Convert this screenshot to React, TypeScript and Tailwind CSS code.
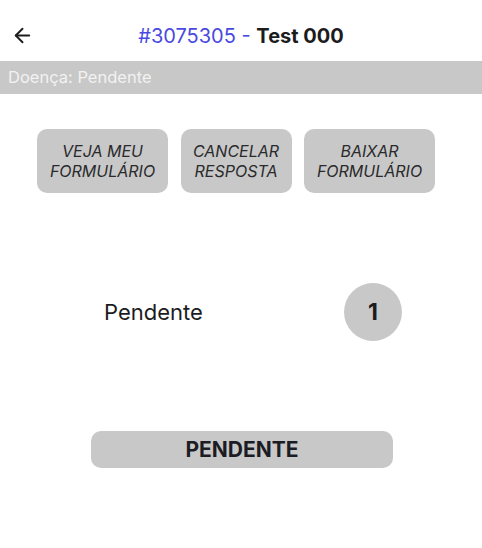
import { ArrowLeft } from "lucide-react";

const actions = [
  { lines: ["VEJA MEU", "FORMULÁRIO"], w: "w-[131px]" },
  { lines: ["CANCELAR", "RESPOSTA"], w: "w-[111px]" },
  { lines: ["BAIXAR", "FORMULÁRIO"], w: "w-[131px]" },
];

export default function App() {
  return (
    <div className="w-[482px] h-[548px] bg-white font-['Inter',sans-serif] text-[#1c1c1e]">
      <header className="relative flex items-center justify-center h-[61px]">
        <button className="absolute left-[11px] top-[24px] text-[#1c1c1e]">
          <ArrowLeft className="w-[23px] h-[23px]" strokeWidth={2} />
        </button>
        <h1 className="text-[20px] leading-none pt-[10px]">
          <span className="text-[#4a4ae0]">#3075305 - </span>
          <span className="font-bold">Test 000</span>
        </h1>
      </header>

      <div className="h-[33px] bg-[#c8c8c8] flex items-center px-[8px]">
        <span className="text-[16.5px] text-[#f2f2f2]">Doença: Pendente</span>
      </div>

      <div className="flex gap-[12.5px] mt-[35px] ml-[37px]">
        {actions.map((a, i) => (
          <button
            key={i}
            className={`h-[64px] rounded-[10px] bg-[#c8c8c8] flex flex-col items-center justify-center italic text-[16px] leading-[20px] text-[#2a2a2c] ${a.w}`}
          >
            <span>{a.lines[0]}</span>
            <span>{a.lines[1]}</span>
          </button>
        ))}
      </div>

      <div className="flex items-center mt-[90px] pl-[104px]">
        <span className="text-[22px] w-[240px]">Pendente</span>
        <div className="w-[58px] h-[58px] rounded-full bg-[#c8c8c8] flex items-center justify-center">
          <span className="text-[23px] font-bold">1</span>
        </div>
      </div>

      <div className="flex justify-center mt-[90px] pl-[2px]">
        <div className="w-[302px] h-[37px] rounded-[10px] bg-[#c8c8c8] flex items-center justify-center">
          <span className="text-[21px] font-bold text-[#1c1c24]">PENDENTE</span>
        </div>
      </div>
    </div>
  );
}
